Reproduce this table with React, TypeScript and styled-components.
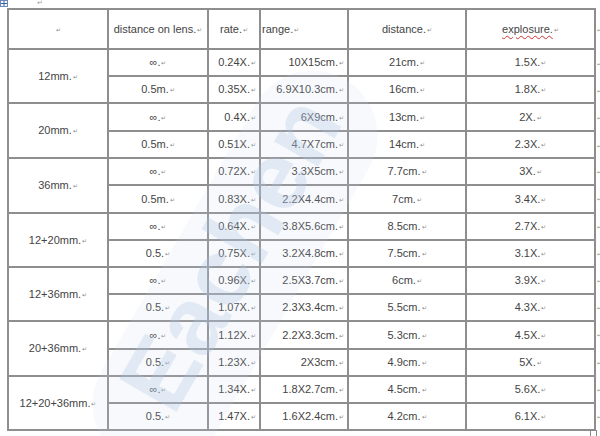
import React from "react";
import styled, { createGlobalStyle } from "styled-components";

const Global = createGlobalStyle`
  html, body { margin: 0; padding: 0; background: #fff; }
  body { font-family: "Liberation Sans", Arial, sans-serif; }
`;

const Page = styled.div`
  position: relative;
  width: 600px;
  height: 436px;
  overflow: hidden;
  background: #fff;
`;

const TopBar = styled.div`
  display: flex;
  align-items: flex-start;
  height: 7px;
  gap: 29px;
`;

const MoveHandle = styled.div`
  width: 8px;
  height: 7px;
  border: 1px solid #6b86b8;
  box-sizing: border-box;
  display: flex;
  align-items: center;
  justify-content: center;
  background: #f4f7fc;
`;

const TopMark = styled.span`
  font-size: 7px;
  line-height: 6px;
  color: #9a9a9a;
`;

const Wrap = styled.div`
  display: flex;
  align-items: flex-start;
  padding-left: 7px;
  padding-top: 1px;
`;

const Table = styled.table`
  border-collapse: collapse;
  table-layout: fixed;
  width: 587px;
  font-size: 11px;
  color: #444;
`;

const Cell = styled.td<{ $align?: "left" | "center" | "right"; $h?: number }>`
  border: 2px solid #8e8e8e;
  text-align: ${(p) => p.$align || "center"};
  height: ${(p) => (p.$h ? p.$h - 2 : 25)}px;
  padding: 0 ${(p) => (p.$align === "right" ? 3 : 0)}px 0
    ${(p) => (p.$align === "left" ? 1 : 0)}px;
  vertical-align: middle;
  white-space: nowrap;
  line-height: 14px;
`;

const Mark = styled.span`
  font-size: 6px;
  color: #8a8a8a;
  margin-left: 1px;
  vertical-align: 1px;
`;

const Squiggle = styled.span`
  text-decoration: underline wavy #d23030;
  text-decoration-thickness: 1px;
  text-underline-offset: 2px;
`;

const RowMarks = styled.div`
  display: flex;
  flex-direction: column;
  padding-top: 2px;
  width: 5px;
  font-size: 5px;
  color: #8a8a8a;
  margin-left: 1px;
`;

const RowMark = styled.div<{ $h: number }>`
  height: ${(p) => p.$h}px;
  display: flex;
  align-items: center;
`;

const Resize = styled.div`
  position: absolute;
  left: 590px;
  top: 430px;
  width: 5px;
  height: 5px;
  border: 1px solid #888;
  background: #fff;
`;

const Watermark = styled.div`
  position: absolute;
  left: 30px;
  top: 205px;
  width: 400px;
  transform: rotate(-60deg);
  transform-origin: center;
  font-family: "Liberation Sans", Arial, sans-serif;
  font-weight: bold;
  font-size: 96px;
  color: rgba(176, 196, 226, 0.3);
  pointer-events: none;
  line-height: 1;
  text-align: center;
`;

const Band = styled.div`
  position: absolute;
  left: 170px;
  top: 50px;
  width: 130px;
  height: 440px;
  border-radius: 65px;
  transform: rotate(30deg);
  background: rgba(200, 214, 236, 0.14);
  pointer-events: none;
`;

const T = ({ children }: { children: React.ReactNode }) => (
  <>
    {children}
    <Mark>↵</Mark>
  </>
);

type Row = { lens: string; rate: string; range: string; d: string; exp: string };
type Group = { name: string; rows: [Row, Row] };

const groups: Group[] = [
  { name: "12mm.", rows: [
    { lens: "∞.", rate: "0.24X.", range: "10X15cm.", d: "21cm.", exp: "1.5X." },
    { lens: "0.5m.", rate: "0.35X.", range: "6.9X10.3cm.", d: "16cm.", exp: "1.8X." },
  ] },
  { name: "20mm.", rows: [
    { lens: "∞.", rate: "0.4X.", range: "6X9cm.", d: "13cm.", exp: "2X." },
    { lens: "0.5m.", rate: "0.51X.", range: "4.7X7cm.", d: "14cm.", exp: "2.3X." },
  ] },
  { name: "36mm.", rows: [
    { lens: "∞.", rate: "0.72X.", range: "3.3X5cm.", d: "7.7cm.", exp: "3X." },
    { lens: "0.5m.", rate: "0.83X.", range: "2.2X4.4cm.", d: "7cm.", exp: "3.4X." },
  ] },
  { name: "12+20mm.", rows: [
    { lens: "∞.", rate: "0.64X.", range: "3.8X5.6cm.", d: "8.5cm.", exp: "2.7X." },
    { lens: "0.5.", rate: "0.75X.", range: "3.2X4.8cm.", d: "7.5cm.", exp: "3.1X." },
  ] },
  { name: "12+36mm.", rows: [
    { lens: "∞.", rate: "0.96X.", range: "2.5X3.7cm.", d: "6cm.", exp: "3.9X." },
    { lens: "0.5.", rate: "1.07X.", range: "2.3X3.4cm.", d: "5.5cm.", exp: "4.3X." },
  ] },
  { name: "20+36mm.", rows: [
    { lens: "∞.", rate: "1.12X.", range: "2.2X3.3cm.", d: "5.3cm.", exp: "4.5X." },
    { lens: "0.5.", rate: "1.23X.", range: "2X3cm.", d: "4.9cm.", exp: "5X." },
  ] },
  { name: "12+20+36mm.", rows: [
    { lens: "∞.", rate: "1.34X.", range: "1.8X2.7cm.", d: "4.5cm.", exp: "5.6X." },
    { lens: "0.5.", rate: "1.47X.", range: "1.6X2.4cm.", d: "4.2cm.", exp: "6.1X." },
  ] },
];

const rowHeights = [27, 27, 28, 27, 26, 28, 27, 27, 27, 27, 28, 27, 27, 27];

export default function App() {
  let idx = 0;
  return (
    <Page>
      <Global />
      <Band />
      <TopBar>
        <MoveHandle>
          <svg width="6" height="5" viewBox="0 0 6 5">
            <path d="M0 2.5h6M3 0v5" stroke="#3d62a8" strokeWidth="1" />
          </svg>
        </MoveHandle>
        <TopMark>↵</TopMark>
      </TopBar>
      <Wrap>
        <Table>
          <colgroup>
            <col style={{ width: 100 }} />
            <col style={{ width: 100 }} />
            <col style={{ width: 52 }} />
            <col style={{ width: 88 }} />
            <col style={{ width: 118 }} />
            <col style={{ width: 129 }} />
          </colgroup>
          <tbody>
            <tr>
              <Cell $h={40}><Mark>↵</Mark></Cell>
              <Cell><T>distance on lens.</T></Cell>
              <Cell><T>rate.</T></Cell>
              <Cell $align="left"><T>range.</T></Cell>
              <Cell><T>distance.</T></Cell>
              <Cell><Squiggle>explosure.</Squiggle><Mark>↵</Mark></Cell>
            </tr>
            {groups.flatMap((g) =>
              g.rows.map((r, i) => {
                const h = rowHeights[idx++];
                return (
                  <tr key={g.name + i}>
                    {i === 0 && (
                      <Cell rowSpan={2}><T>{g.name}</T></Cell>
                    )}
                    <Cell $h={h}><T>{r.lens}</T></Cell>
                    <Cell $align="right"><T>{r.rate}</T></Cell>
                    <Cell $align="right"><T>{r.range}</T></Cell>
                    <Cell><T>{r.d}</T></Cell>
                    <Cell><T>{r.exp}</T></Cell>
                  </tr>
                );
              })
            )}
          </tbody>
        </Table>
        <RowMarks>
          <RowMark $h={40}>↵</RowMark>
          {rowHeights.map((h, i) => (
            <RowMark key={i} $h={h}>↵</RowMark>
          ))}
        </RowMarks>
      </Wrap>
      <Watermark>Eachen</Watermark>
      <Resize />
    </Page>
  );
}
